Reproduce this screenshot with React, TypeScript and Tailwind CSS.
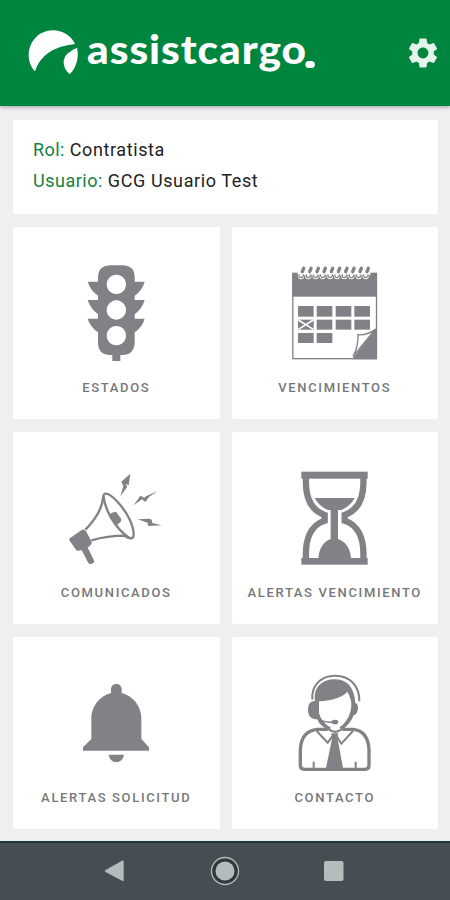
import React from 'react';
import { MdSettings } from 'react-icons/md';

const TrafficLightIcon = () => (
  <svg viewBox="-45 6 336 336" className="w-28 h-28" fill="#828186">
    <path
      fillRule="evenodd"
      d="M103 31H146Q178 34 179 64V80H209Q202 106 179 122V135H209Q202 161 179 178V191H209Q202 216 179 232V266Q176 298 146 300H136V318H112V300H103Q70 298 69 266V232Q46 216 38 191H69V178Q46 161 38 135H69V122Q46 106 38 80H69V64Q71 34 103 31Z
      M124 59a29 29 0 1 0 .1 0ZM124 136a29 29 0 1 0 .1 0ZM124 213a29 29 0 1 0 .1 0Z"
    />
  </svg>
);

const CalendarIcon = () => {
  const rings = [70, 92, 114, 135, 157, 178, 200, 221, 243, 264];
  const days = [
    [55, 153], [111, 153], [168, 153], [224, 153],
    [111, 194], [168, 194], [224, 194],
    [55, 234], [111, 234],
  ];
  return (
    <svg viewBox="-2 6 336 336" className="w-28 h-28" fill="#828186">
      <rect x="39.5" y="55" width="251" height="256" fill="none" stroke="#828186" strokeWidth="4" />
      <rect x="38" y="54" width="254" height="71" />
      <rect x="54" y="50" width="218" height="11" fill="#fff" />
      {rings.map(x => (
        <g key={x} fill="none">
          <circle cx={x - 6} cy="64" r="9" fill="#fff" />
          <path d={`M${x + 2} 40L${x - 2} 50`} stroke="#828186" strokeWidth="10" strokeLinecap="round" />
          <path d={`M${x - 12} 58q-1 10 6 10q6 0 8-10`} stroke="#828186" strokeWidth="3.5" />
        </g>
      ))}
      {days.map(([x, y]) => (
        <rect key={`${x}-${y}`} x={x} y={y} width="47" height={y === 153 ? 32 : 30} />
      ))}
      <rect x="55" y="194" width="47" height="30" />
      <path d="M56 195L101 223M101 195L56 223" stroke="#fff" strokeWidth="5" />
      <path d="M292 215L217 313H292Z" />
      <path d="M286 224Q258 243 235 239Q236 276 220 305Q248 270 286 224Z" fill="#fff" stroke="#828186" strokeWidth="4" />
    </svg>
  );
};

const MegaphoneIcon = () => (
  <svg viewBox="0 -9 336 336" className="w-28 h-28" fill="#828186">
    <path
      d="M76 194C108 162 127 132 130 94C132 78 150 86 173 111C202 142 222 183 221 211C220 223 208 222 193 212Q143 212 94 226"
      fill="none"
      stroke="#828186"
      strokeWidth="7"
    />
    <path d="M130 92C135 134 163 187 207 218" fill="none" stroke="#828186" strokeWidth="7" />
    <path d="M147 152L155 143L168 140L184 162L182 171L171 179Z" />
    <path d="M35 216Q25 220 29 227L47 253Q50 259 57 257L65 255L83 290Q87 300 95 296L101 293Q105 290 101 284L83 248L92 240Q98 235 94 228L78 199Q72 190 64 196Z" />
    <path d="M211 26L184 50L190 64L181 94L202 65L196 56L206 61Z" />
    <path d="M292 79L258 94L253 98L241 92L221 121L246 103L256 111L267 96Z" />
    <path d="M233 163L263 173L264 183L305 181L277 174L275 164L267 161Z" />
  </svg>
);

const HourglassIcon = () => (
  <svg viewBox="-17 6 336 336" className="w-28 h-28" fill="#828186">
    <rect x="50" y="35" width="199" height="21" />
    <rect x="50" y="294" width="199" height="20" />
    <path
      d="M64 54C61 112 78 150 120 165V182C78 195 61 239 64 296M236 54C239 112 222 150 180 165V182C222 195 239 239 236 296"
      fill="none"
      stroke="#828186"
      strokeWidth="19"
    />
    <path d="M90 114H210Q197 139 170 150H160V237Q196 250 199 296H101Q104 250 138 237V150H130Q103 139 90 114Z" />
  </svg>
);

const BellIcon = () => (
  <svg viewBox="-30 -9 336 336" className="w-28 h-28" fill="#828186">
    <path d="M123 55Q126 42 139 42Q152 42 155 55V69C190 78 214 110 214 144V207L237 232V242H39V232L64 207V144C64 110 88 78 123 69Z" />
    <path d="M116 254H162C159 269 151 276 139 276C127 276 119 269 116 254Z" />
  </svg>
);

const AgentIcon = () => (
  <svg viewBox="-17 6 336 336" className="w-28 h-28" fill="#828186">
    <path d="M83 104C80 62 108 32 151 32C196 32 225 63 224 109" fill="none" stroke="#828186" strokeWidth="6" />
    <path d="M91 107C85 64 116 43 150 43C187 43 209 66 212 114Q223 119 219 136Q216 149 207 151C200 170 187 184 174 194L164 187C183 176 198 151 200 124Q201 101 188 80Q166 105 103 109V161Q89 166 78 157Q69 149 70 130Q71 109 91 107Z" />
    <path d="M102 140C106 158 116 174 139 188L130 195C113 185 103 177 98 163" />
    <path d="M101 163Q121 174 144 171" fill="none" stroke="#828186" strokeWidth="5" />
    <ellipse cx="151" cy="171" rx="10" ry="7" />
    <path
      d="M129 193H98Q50 197 47 254V301Q47 313 59 313H241Q253 313 253 301V254Q250 197 205 193H173"
      fill="none"
      stroke="#828186"
      strokeWidth="10"
    />
    <path d="M96 198L129 233L147 209M205 198L170 236L153 209M129 190Q151 211 174 190M87 290V311M213 290V311" fill="none" stroke="#828186" strokeWidth="6" />
    <path d="M139 205H161L158 217L175 309H124L143 217Z" />
  </svg>
);

const MENU_ITEMS = [
  { label: 'ESTADOS', Icon: TrafficLightIcon },
  { label: 'VENCIMIENTOS', Icon: CalendarIcon },
  { label: 'COMUNICADOS', Icon: MegaphoneIcon },
  { label: 'ALERTAS VENCIMIENTO', Icon: HourglassIcon },
  { label: 'ALERTAS SOLICITUD', Icon: BellIcon },
  { label: 'CONTACTO', Icon: AgentIcon },
];

const Header = () => (
  <header className="h-[106px] shrink-0 bg-[#00853f] flex items-center justify-between pl-7 pr-[9px] shadow-[0_1px_4px_rgba(0,0,0,0.35)]">
    <div className="flex items-center">
      <svg viewBox="24 27 156 144" className="w-[52px] h-12" fill="#fff">
        <path d="M45 154C22 130 18 88 43 57C77 16 143 25 165 72Q67 83 45 154Z" />
        <path d="M171 83C178 111 169 143 149 163Q129 145 131 122Q135 98 171 83Z" />
      </svg>
      <h1 className="ml-[7px] -mt-[9px] flex items-end origin-left scale-x-[1.06] text-white font-black text-[40px] leading-[48px] tracking-[0.9px] font-['Lato',sans-serif]">
        assistcargo
        <span className="-ml-[2px] w-[9px] h-[7px] mb-[5px] rounded-full bg-white" />
      </h1>
    </div>
    <button className="text-[#e4f4ea]" aria-label="Configuración">
      <MdSettings size={36} />
    </button>
  </header>
);

const App = () => {
  return (
    <div className="w-[450px] h-[900px] flex flex-col bg-[#efefef] overflow-hidden font-['Roboto',sans-serif]">
      <Header />

      <main className="flex-1 pl-[13px] pr-3 pt-[14px]">
        {/* User info */}
        <section className="h-[94px] rounded-[2px] bg-white pl-5 pt-[14px] text-[18px] leading-[31px] tracking-[0.6px] text-[#222]">
          <p><span className="text-[#16803f] tracking-[0.4px]">Rol:</span> Contratista</p>
          <p><span className="text-[#16803f] tracking-[0.5px]">Usuario:</span> GCG Usuario Test</p>
        </section>

        {/* Menu */}
        <div className="mt-[13px] grid grid-cols-2 gap-x-3 gap-y-[12.7px]">
          {MENU_ITEMS.map(({ label, Icon }) => (
            <button key={label} className="h-[192.3px] rounded-[2px] bg-white flex flex-col items-center pt-[30px]">
              <Icon />
              <span className="mt-[11px] text-[13px] leading-4 font-medium tracking-[1.65px] text-[#77777a] whitespace-nowrap">
                {label}
              </span>
            </button>
          ))}
        </div>
      </main>

      {/* Android navigation bar */}
      <nav className="h-[59px] shrink-0 bg-[#464d53] border-t-2 border-[#203b3b] flex justify-center items-center gap-[77px] pb-[2px]">
        <svg viewBox="0 0 32 32" className="w-8 h-8" fill="#b4bcbc">
          <path d="M5.5 15L22.5 5.5Q23.7 5 23.7 6.5V25Q23.7 26.7 22.5 26L5.5 17Q4 16 5.5 15Z" />
        </svg>
        <svg viewBox="0 0 32 32" className="w-8 h-8" fill="#b4bcbc">
          <circle cx="16" cy="16" r="13.5" fill="#303a3d" stroke="#b4bcbc" strokeWidth="1.3" />
          <circle cx="16" cy="16" r="9.5" />
        </svg>
        <svg viewBox="0 0 32 32" className="w-8 h-8" fill="#b4bcbc">
          <rect x="6" y="6" width="19.5" height="20" rx="2" />
        </svg>
      </nav>
    </div>
  );
};

export default App;
